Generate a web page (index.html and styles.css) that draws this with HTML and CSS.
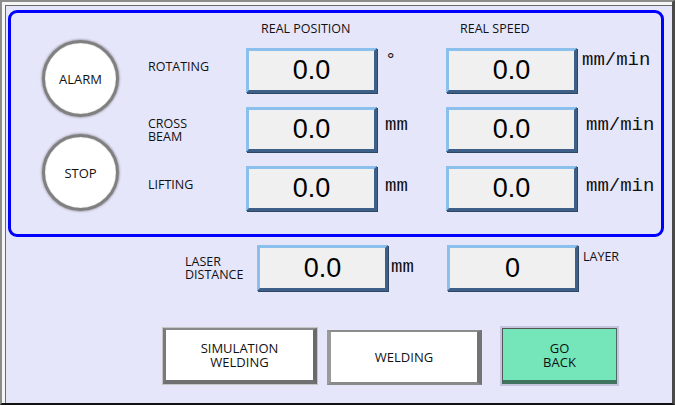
FILE: index.html
```html
<!DOCTYPE html>
<html>
<head>
    <title>Welding Axis Panel</title>
    <link rel="stylesheet" href="styles.css">
</head>
<body>
    <div class="screen">
        <div class="panel">
            <div class="round-col">
                <button class="round">ALARM</button>
                <button class="round">STOP</button>
            </div>
            <div class="head head-pos">REAL POSITION</div>
            <div class="head head-speed">REAL SPEED</div>

            <div class="axis axis-rot">
                <div class="label single">ROTATING</div>
                <div class="val" id="rot-pos">0.0</div>
                <div class="unit">&deg;</div>
                <div class="val" id="rot-speed">0.0</div>
                <div class="unit unit-speed">mm/min</div>
            </div>

            <div class="axis axis-beam">
                <div class="label">CROSS<br>BEAM</div>
                <div class="val" id="beam-pos">0.0</div>
                <div class="unit">mm</div>
                <div class="val" id="beam-speed">0.0</div>
                <div class="unit unit-speed">mm/min</div>
            </div>

            <div class="axis axis-lift">
                <div class="label single">LIFTING</div>
                <div class="val" id="lift-pos">0.0</div>
                <div class="unit">mm</div>
                <div class="val" id="lift-speed">0.0</div>
                <div class="unit unit-speed">mm/min</div>
            </div>
        </div>

        <div class="laser-row">
            <div class="label laser-label">LASER<br>DISTANCE</div>
            <div class="val" id="laser">0.0</div>
            <div class="unit laser-unit">mm</div>
            <div class="val" id="layer">0</div>
            <div class="label layer-label">LAYER</div>
        </div>

        <div class="btn-row">
            <button class="btn btn-sim">SIMULATION<br>WELDING</button>
            <button class="btn btn-weld">WELDING</button>
            <button class="btn btn-back">GO<br>BACK</button>
        </div>
    </div>
</body>
</html>
```

FILE: styles.css
```css
body { margin: 0; background: #e6e6fa; }
button { font: inherit; color: inherit; padding: 0; cursor: pointer; }

.screen {
    width: 675px; height: 405px; box-sizing: border-box;
    border-style: solid; border-width: 2px 3px 2px 2px;
    border-color: #8c8c8c #4a4a4a #111 #8c8c8c;
    box-shadow: inset 3px 3px 0 #f6f6f6, inset 4px 4px 0 #6c6c6c;
    background: #e6e6fa; padding: 8px 0 0 6px;
    font-family: "Open Sans", "Liberation Sans", sans-serif;
    font-size: 12.5px; color: #111;
}

/* axis block in the blue frame */
.panel {
    width: 656px; height: 227px; box-sizing: border-box;
    border: 3px solid #0000ff; border-radius: 9px;
    padding: 10px 0 0 31px;
    display: grid;
    grid-template-columns: 78px 126px 131px 69px 131px 1fr;
    grid-template-rows: 11px 45px 45px 45px;
    row-gap: 14px;
}
.axis { display: contents; }
.axis-rot > * { grid-row: 2; }
.axis-beam > * { grid-row: 3; }
.axis-lift > * { grid-row: 4; }

.round-col {
    grid-row: 1 / -1; grid-column: 1;
    display: flex; flex-direction: column; gap: 17px;
    padding-top: 17px;
}
.round {
    width: 77px; height: 77px; box-sizing: border-box;
    border-radius: 50%; background: #fff;
    border: 3px solid #808080;
    box-shadow: 0 0 2px 1px rgba(0, 0, 0, .25), inset 0 0 1px #999;
    font-size: 13px;
}
.head { grid-row: 1; align-self: center; line-height: 15px; white-space: nowrap; }
.head-pos { grid-column: 3; padding-left: 15px; }
.head-speed { grid-column: 5; padding-left: 14px; }

.panel .label { grid-column: 2; padding-left: 28px; }
.label { align-self: center; line-height: 13px; }
.label.single { padding-bottom: 9px; }

.val {
    box-sizing: border-box; height: 45px;
    border: 3px solid; border-color: #8cc0ec #3e6088 #3e6088 #8cc0ec;
    box-shadow: 1px 1px 0 #2e4864;
    background: #f0f0f0;
    font: 27px "Liberation Sans", sans-serif; color: #000;
    display: flex; align-items: center; justify-content: center;
}
.unit {
    font: 19px "Liberation Mono", monospace; color: #111;
    padding-left: 8px; align-self: center; padding-bottom: 10px;
}
.unit-speed { padding-left: 9px; }
.axis-rot .unit { padding-bottom: 22px; }
.axis-rot .unit-speed { padding-left: 5px; }
.axis-lift .unit { padding-bottom: 6px; }

/* laser distance / layer */
.laser-row {
    display: flex; margin: 8px 0 0 177px; height: 46px;
}
.laser-row .val { width: 131px; height: 46px; flex-shrink: 0; }
.laser-label { width: 72px; flex-shrink: 0; white-space: nowrap; }
.laser-unit { width: 59px; padding-left: 3px; padding-bottom: 2px; box-sizing: border-box; }
.layer-label { align-self: flex-start; padding: 5px 0 0 5px; }

/* bottom buttons */
.btn-row { display: flex; margin: 37px 0 0 155px; align-items: flex-start; }
.btn {
    height: 56px; box-sizing: border-box; background: #fff;
    border-style: solid; line-height: 14px; font-size: 13px;
}
.btn-sim {
    width: 154px;
    border-width: 2px 4px 4px 3px;
    border-color: #8a8a8a #6a6a6a #707070 #7a7a7a;
    box-shadow: 0 0 0 1px #c4c4c4;
}
.btn-weld {
    width: 155px; margin: 2px 0 0 10px; height: 55px;
    border-width: 2px 5px 3px 4px;
    border-color: #8c8c8c #737373 #8a8a8a #9a9a9a;
}
.btn-back {
    width: 115px; margin-left: 20px;
    background: #74e6ba;
    border-width: 1px 1px 4px 1px;
    border-color: #555 #4c6a5e #3f7560 #555;
    box-shadow: 0 0 0 2px #c4c4dc;
}
```
